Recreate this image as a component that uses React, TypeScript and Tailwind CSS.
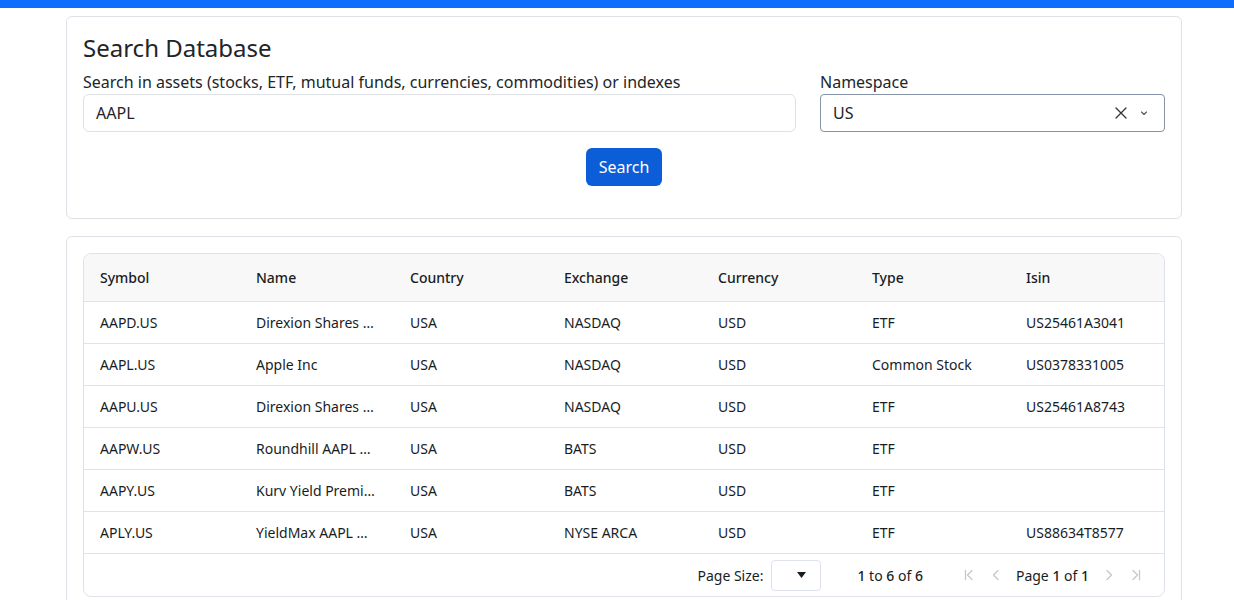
import React from "react";

interface Asset {
  symbol: string;
  name: string;
  country: string;
  exchange: string;
  currency: string;
  type: string;
  isin: string;
}

const COLUMNS = ["Symbol", "Name", "Country", "Exchange", "Currency", "Type", "Isin"];

const ROWS: Asset[] = [
  { symbol: "AAPD.US", name: "Direxion Shares …", country: "USA", exchange: "NASDAQ", currency: "USD", type: "ETF", isin: "US25461A3041" },
  { symbol: "AAPL.US", name: "Apple Inc", country: "USA", exchange: "NASDAQ", currency: "USD", type: "Common Stock", isin: "US0378331005" },
  { symbol: "AAPU.US", name: "Direxion Shares …", country: "USA", exchange: "NASDAQ", currency: "USD", type: "ETF", isin: "US25461A8743" },
  { symbol: "AAPW.US", name: "Roundhill AAPL …", country: "USA", exchange: "BATS", currency: "USD", type: "ETF", isin: "" },
  { symbol: "AAPY.US", name: "Kurv Yield Premi…", country: "USA", exchange: "BATS", currency: "USD", type: "ETF", isin: "" },
  { symbol: "APLY.US", name: "YieldMax AAPL …", country: "USA", exchange: "NYSE ARCA", currency: "USD", type: "ETF", isin: "US88634T8577" },
];

const font = { fontFamily: '"Noto Sans", "Open Sans", sans-serif' };

function Cells({ values, bold }: { values: string[]; bold?: boolean }) {
  return (
    <>
      {values.map((v, i) => (
        <div
          key={i}
          className={`${i === 0 ? "w-[156px] pl-[16px]" : "w-[154px] pl-[16px]"} shrink-0 truncate ${bold ? "font-medium" : ""}`}
        >
          {v}
        </div>
      ))}
    </>
  );
}

function PagerIcon({ kind }: { kind: "first" | "prev" | "next" | "last" }) {
  return (
    <svg width="16" height="16" viewBox="0 0 16 16" fill="none" stroke="#c5c8cb" strokeWidth="1.3" strokeLinecap="round" strokeLinejoin="round">
      {kind === "first" && (<><path d="M4.5 3.5v9" /><path d="M11 3.5 6.5 8l4.5 4.5" /></>)}
      {kind === "prev" && <path d="M10 3.5 5.5 8l4.5 4.5" />}
      {kind === "next" && <path d="M6 3.5 10.5 8 6 12.5" />}
      {kind === "last" && (<><path d="M11.5 3.5v9" /><path d="M5 3.5 9.5 8 5 12.5" /></>)}
    </svg>
  );
}

export default function App() {
  return (
    <div className="min-h-[600px] bg-white text-[#212529]" style={font}>
      <div className="h-2 bg-[#0d6efd]" />

      <div className="pl-[66px] pt-2">
        {/* Search card */}
        <div className="w-[1116px] rounded-md border border-[#dee2e6] px-4 pt-4 pb-4">
          <h4 className="text-[24px] leading-[29px] font-normal mb-2">Search Database</h4>
          <div className="flex gap-6">
            <div className="w-[713px]">
              <label className="block text-base leading-6">
                Search in assets (stocks, ETF, mutual funds, currencies, commodities) or indexes
              </label>
              <div className="h-[38px] rounded-md border border-[#dee2e6] px-3 flex items-center text-base">
                AAPL
              </div>
            </div>
            <div className="w-[345px]">
              <label className="block text-base leading-6">Namespace</label>
              <div className="h-[38px] rounded-[4px] border border-[#8592a8] flex items-center pl-3 pr-[16px] text-base">
                <span className="flex-1">US</span>
                <svg width="14" height="14" viewBox="0 0 14 14" stroke="#333" strokeWidth="1.3" strokeLinecap="round">
                  <path d="M2 2l10 10M12 2 2 12" />
                </svg>
                <svg className="ml-[12px]" width="8" height="8" viewBox="0 0 8 8" fill="none" stroke="#555" strokeWidth="1.1" strokeLinecap="round" strokeLinejoin="round">
                  <path d="M1.5 3 4 5.5 6.5 3" />
                </svg>
              </div>
            </div>
          </div>
          <div className="flex justify-center mt-4 mb-4">
            <button className="h-[38px] px-[13px] rounded-md bg-[#0b5ed7] text-white text-base">Search</button>
          </div>
        </div>

        {/* Results card */}
        <div className="w-[1116px] mt-[17px] rounded-md border border-[#dee2e6] px-4 pt-4 pb-4">
          <div className="rounded-lg border border-[#dde2eb] text-[14px] text-[#181d1f] overflow-hidden">
            <div className="h-[48px] flex items-center bg-[#f8f8f8] border-b border-[#dde2eb]">
              <Cells values={COLUMNS} bold />
            </div>
            {ROWS.map((r) => (
              <div key={r.symbol} className="h-[42px] flex items-center border-b border-[#dde2eb]">
                <Cells values={[r.symbol, r.name, r.country, r.exchange, r.currency, r.type, r.isin]} />
              </div>
            ))}
            <div className="h-[42px] flex items-center justify-end pr-[20px]">
              <span>Page Size:</span>
              <div className="ml-2 w-[50px] h-[31px] rounded-[4px] border border-[#dde2eb] flex items-center justify-end pr-[14px]">
                <svg width="9" height="6" viewBox="0 0 9 6" fill="#181d1f">
                  <path d="M0 0h9L4.5 6z" />
                </svg>
              </div>
              <span className="ml-[36px] mr-[38px]">
                <b className="font-medium">1</b> to <b className="font-medium">6</b> of <b className="font-medium">6</b>
              </span>
              <div className="flex items-center gap-[11px]">
                <PagerIcon kind="first" />
                <PagerIcon kind="prev" />
                <span className="mx-[1px]">
                  Page <b className="font-medium">1</b> of <b className="font-medium">1</b>
                </span>
                <PagerIcon kind="next" />
                <PagerIcon kind="last" />
              </div>
            </div>
          </div>
        </div>
      </div>
    </div>
  );
}
